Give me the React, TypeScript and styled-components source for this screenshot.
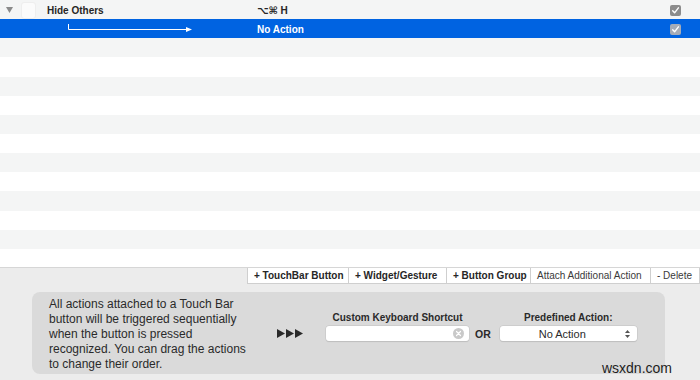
import React from "react";
import styled, { createGlobalStyle } from "styled-components";

const GlobalStyle = createGlobalStyle`
  html, body { margin: 0; padding: 0; }
  body {
    background: #ececec;
    font-family: "Liberation Sans", Arial, "DejaVu Sans", sans-serif;
    color: #262626;
  }
`;

const Page = styled.div`
  position: relative;
  width: 700px;
  height: 380px;
  overflow: hidden;
  display: flex;
  flex-direction: column;
  background: #ececec;
`;

const Table = styled.div`
  height: 267px;
  flex: none;
  overflow: hidden;
  display: grid;
  grid-auto-rows: 19.15px;
  border-bottom: 1px solid #d6d6d6;
  background: #ffffff;
`;

const Row = styled.div<{ $bg: string }>`
  box-sizing: border-box;
  padding-top: 1px;
  display: grid;
  grid-template-columns: 47px 210px 413px 30px;
  align-items: center;
  background: ${(p) => p.$bg};
  font-size: 10px;
  font-weight: bold;
  color: ${(p) => (p.$bg === "#0063e1" ? "#ffffff" : "#262626")};
`;

const LeadCell = styled.div`
  display: flex;
  align-items: center;
  height: 100%;
  padding-left: 6px;
  gap: 8px;
`;

const ItemIcon = styled.div`
  width: 13px;
  height: 15px;
  border-radius: 3px;
  background: #fbfbfb;
  border: 1px solid #eeeeee;
`;

const Cell = styled.div`
  display: flex;
  align-items: center;
  height: 100%;
  white-space: nowrap;
`;

const Shortcut = styled.span`
  font-family: "Liberation Sans", "DejaVu Sans", sans-serif;
`;

const CheckWrap = styled.div`
  display: flex;
  align-items: center;
  height: 100%;
`;

const Toolbar = styled.div`
  display: flex;
  justify-content: flex-end;
  height: 16px;
  flex: none;
`;

const ToolButton = styled.div<{ $w: number; $bold?: boolean }>`
  box-sizing: border-box;
  flex: none;
  width: ${(p) => p.$w}px;
  height: 16px;
  padding-left: 6px;
  display: flex;
  align-items: center;
  background: #ffffff;
  border: 1px solid #cfcfcf;
  border-top: none;
  margin-left: -1px;
  font-size: 10px;
  font-weight: ${(p) => (p.$bold ? "bold" : "normal")};
  color: ${(p) => (p.$bold ? "#262626" : "#3a3a3a")};
  white-space: nowrap;
`;

const Bottom = styled.div`
  flex: 1;
  padding: 8px 0 0 32px;
`;

const Panel = styled.div`
  box-sizing: border-box;
  width: 633px;
  height: 82px;
  border-radius: 8px;
  background: #dadada;
  display: flex;
  align-items: flex-start;
  padding-top: 5px;
`;

const Description = styled.div`
  flex: none;
  width: 228px;
  margin-left: 17px;
  font-size: 12px;
  line-height: 15px;
  color: #2a2a2a;
`;

const Controls = styled.div`
  display: grid;
  grid-template-columns: 49px 143px auto 137px;
  grid-template-rows: 12px 15px;
  row-gap: 3px;
  align-items: center;
  margin-top: 14px;
`;

const Triangles = styled.div`
  grid-row: 2;
  grid-column: 1;
  display: flex;
  gap: 1px;
`;

const Label = styled.div<{ $col: number }>`
  grid-row: 1;
  grid-column: ${(p) => p.$col};
  text-align: center;
  font-size: 10px;
  font-weight: bold;
  color: #2a2a2a;
  white-space: nowrap;
`;

const Field = styled.div`
  grid-row: 2;
  grid-column: 2;
  box-sizing: border-box;
  height: 15px;
  background: #ffffff;
  border-radius: 3px;
  box-shadow: 0 0 0 0.5px #c4c4c4, 0 0.5px 1px rgba(0, 0, 0, 0.15);
  display: flex;
  align-items: center;
  justify-content: flex-end;
  padding-right: 5px;
`;

const Or = styled.div`
  grid-row: 2;
  grid-column: 3;
  padding: 0 9px 0 6px;
  font-size: 10.5px;
  font-weight: bold;
  color: #2a2a2a;
`;

const Select = styled.div`
  grid-row: 2;
  grid-column: 4;
  position: relative;
  box-sizing: border-box;
  height: 15px;
  background: #ffffff;
  border-radius: 3px;
  box-shadow: 0 0 0 0.5px #c4c4c4, 0 0.5px 1px rgba(0, 0, 0, 0.15);
  display: flex;
  align-items: center;
  justify-content: center;
  padding-right: 12px;
  font-size: 11px;
  color: #2a2a2a;
`;

const SelectArrows = styled.div`
  position: absolute;
  right: 7px;
  top: 4px;
  display: flex;
`;

const Watermark = styled.div`
  position: absolute;
  right: 28px;
  bottom: 4px;
  font-size: 14px;
  color: #1e1e1e;
  font-family: "Liberation Sans", Arial, sans-serif;
`;

const Checkbox: React.FC<{ $dim?: boolean }> = ({ $dim }) => (
  <svg width="11" height="11" viewBox="0 0 11 11">
    <rect x="0" y="0" width="11" height="11" rx="2" fill={$dim ? "#a5acb8" : "#8c8c8c"} />
    <path d="M2.7 5.7 L4.6 7.8 L8.4 2.8" stroke="#ffffff" strokeWidth="1.4" fill="none" strokeLinecap="round" strokeLinejoin="round" />
  </svg>
);

const Disclosure = () => (
  <svg width="7" height="6" viewBox="0 0 7 6">
    <polygon points="0,0 7,0 3.5,6" fill="#8a8a8a" />
  </svg>
);

const FlowArrow = () => (
  <svg width="125" height="8" viewBox="0 0 125 8" style={{ marginLeft: 21, marginTop: -2 }}>
    <path d="M0.5 0 V5.5 H119" stroke="#ffffff" strokeWidth="1" fill="none" />
    <polygon points="118,3 124,5.5 118,8" fill="#ffffff" />
  </svg>
);

const Play = () => (
  <svg width="8" height="9" viewBox="0 0 8 9">
    <polygon points="0,0 8,4.5 0,9" fill="#2a2a2a" />
  </svg>
);

const ClearIcon = () => (
  <svg width="11" height="11" viewBox="0 0 11 11">
    <circle cx="5.5" cy="5.5" r="5.5" fill="#c9c9c9" />
    <path d="M3.5 3.5 L7.5 7.5 M7.5 3.5 L3.5 7.5" stroke="#ffffff" strokeWidth="1.2" strokeLinecap="round" />
  </svg>
);

const UpDown = () => (
  <svg width="5" height="8" viewBox="0 0 5 8">
    <polygon points="0,3 2.5,0 5,3" fill="#555" />
    <polygon points="0,5 2.5,8 5,5" fill="#555" />
  </svg>
);

const rowColors = (i: number) => (i === 1 ? "#0063e1" : i % 2 === 0 ? "#f4f5f5" : "#ffffff");

export default function App() {
  const rows = Array.from({ length: 14 }, (_, i) => i);
  return (
    <Page>
      <GlobalStyle />
      <Table>
        {rows.map((i) => (
          <Row key={i} $bg={rowColors(i)}>
            {i === 0 && (
              <>
                <LeadCell>
                  <Disclosure />
                  <ItemIcon />
                </LeadCell>
                <Cell>Hide Others</Cell>
                <Cell>
                  <Shortcut>⌥⌘ H</Shortcut>
                </Cell>
                <CheckWrap>
                  <Checkbox />
                </CheckWrap>
              </>
            )}
            {i === 1 && (
              <>
                <LeadCell />
                <Cell>
                  <FlowArrow />
                </Cell>
                <Cell>No Action</Cell>
                <CheckWrap>
                  <Checkbox $dim />
                </CheckWrap>
              </>
            )}
          </Row>
        ))}
      </Table>
      <Toolbar>
        <ToolButton $w={102} $bold>+ TouchBar Button</ToolButton>
        <ToolButton $w={99} $bold>+ Widget/Gesture</ToolButton>
        <ToolButton $w={85} $bold>+ Button Group</ToolButton>
        <ToolButton $w={121}>Attach Additional Action</ToolButton>
        <ToolButton $w={50}>- Delete</ToolButton>
      </Toolbar>
      <Bottom>
        <Panel>
          <Description>
            All actions attached to a Touch Bar
            <br />
            button will be triggered sequentially
            <br />
            when the button is pressed
            <br />
            recognized. You can drag the actions
            <br />
            to change their order.
          </Description>
          <Controls>
            <Triangles>
              <Play />
              <Play />
              <Play />
            </Triangles>
            <Label $col={2}>Custom Keyboard Shortcut</Label>
            <Field>
              <ClearIcon />
            </Field>
            <Or>OR</Or>
            <Label $col={4}>Predefined Action:</Label>
            <Select>
              No Action
              <SelectArrows>
                <UpDown />
              </SelectArrows>
            </Select>
          </Controls>
        </Panel>
      </Bottom>
      <Watermark>wsxdn.com</Watermark>
    </Page>
  );
}
